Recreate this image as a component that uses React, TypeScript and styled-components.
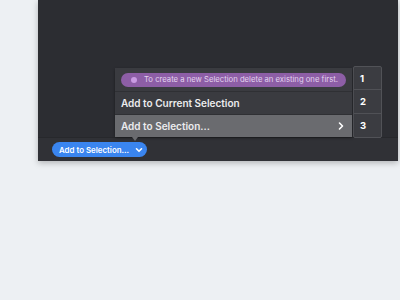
import React from 'react';
import styled, { createGlobalStyle } from 'styled-components';

const GlobalStyle = createGlobalStyle`
  html, body {
    margin: 0;
    padding: 0;
    background: #edf0f3;
    font-family: 'Inter', 'Noto Sans', sans-serif;
  }
`;

const Page = styled.div`
  width: 400px;
  height: 300px;
  overflow: hidden;
`;

const Panel = styled.div`
  position: relative;
  margin-left: 38px;
  width: 360px;
  height: 161px;
  display: flex;
  flex-direction: column;
  background: #2c2d32;
  box-shadow: 0 2px 6px rgba(0, 0, 0, 0.25);
`;

const Canvas = styled.div`
  flex: 1;
`;

const BottomBar = styled.div`
  height: 24px;
  display: flex;
  align-items: center;
  padding-left: 14px;
  background: #303136;
  border-top: 1px solid #27282c;
  box-sizing: border-box;
`;

const DropButton = styled.button`
  display: flex;
  align-items: center;
  gap: 5px;
  height: 15px;
  width: 95px;
  padding: 0 0 0 7px;
  border: none;
  border-radius: 8px;
  background: #3a85ef;
  color: #ffffff;
  font-family: inherit;
  font-size: 7.9px;
  font-weight: 600;
  white-space: nowrap;
  box-sizing: border-box;
`;

const Popover = styled.div`
  position: absolute;
  left: 77px;
  top: 66px;
  display: flex;
  align-items: flex-start;
`;

const Menu = styled.div`
  position: relative;
  margin-top: 2px;
  width: 237px;
  background: #3a3b40;
  border-radius: 2px;
  box-shadow: 0 1px 3px rgba(0, 0, 0, 0.4);

  &::after {
    content: '';
    position: absolute;
    left: 17px;
    bottom: -4px;
    border-left: 3px solid transparent;
    border-right: 3px solid transparent;
    border-top: 4px solid #6b6c70;
  }
`;

const Row = styled.div<{ $active?: boolean }>`
  height: 23px;
  display: flex;
  align-items: center;
  justify-content: space-between;
  padding: 0 6px;
  box-sizing: border-box;
  background: ${(p) => (p.$active ? '#6a6b6f' : '#3a3b40')};
  border-top: 1px solid #2f3034;
  color: #ececee;
  font-size: 10px;
  font-weight: 600;

  &:first-child {
    border-top: none;
  }
`;

const Notice = styled.div`
  display: flex;
  align-items: center;
  gap: 7px;
  width: 100%;
  height: 14px;
  padding-left: 10px;
  border-radius: 7px;
  background: #8d5ea6;
  color: #e3d3ee;
  font-size: 7.7px;
  font-weight: 400;
  box-sizing: border-box;
  white-space: nowrap;
`;

const Dot = styled.span`
  flex-shrink: 0;
  width: 6px;
  height: 6px;
  border-radius: 50%;
  background: #c99be2;
`;

const Numbers = styled.div`
  margin-left: 1px;
  width: 29px;
  background: #3b3c41;
  border: 1px solid #515257;
  border-radius: 2px;
  box-sizing: border-box;
`;

const NumCell = styled.div`
  height: 23px;
  display: flex;
  align-items: center;
  padding-left: 6px;
  border-top: 1px solid #505156;
  color: #ffffff;
  font-size: 9.5px;
  font-weight: 700;

  &:first-child {
    border-top: none;
    height: 22px;
  }
`;

const Chevron = ({ dir, size }: { dir: 'right' | 'down'; size: number }) => (
  <svg width={size} height={size} viewBox="0 0 10 10" fill="none" style={{ flexShrink: 0 }}>
    <path
      d={dir === 'right' ? 'M3.5 2 L6.5 5 L3.5 8' : 'M2.5 3.8 L5 6.3 L7.5 3.8'}
      stroke="#ffffff"
      strokeWidth="1.6"
      strokeLinecap="round"
      strokeLinejoin="round"
    />
  </svg>
);

export default function App() {
  return (
    <Page>
      <GlobalStyle />
      <Panel>
        <Canvas />
        <Popover>
          <Menu>
            <Row>
              <Notice>
                <Dot />
                To create a new Selection delete an existing one first.
              </Notice>
            </Row>
            <Row>Add to Current Selection</Row>
            <Row $active>
              Add to Selection...
              <Chevron dir="right" size={10} />
            </Row>
          </Menu>
          <Numbers>
            <NumCell>1</NumCell>
            <NumCell>2</NumCell>
            <NumCell>3</NumCell>
          </Numbers>
        </Popover>
        <BottomBar>
          <DropButton>
            Add to Selection...
            <Chevron dir="down" size={10} />
          </DropButton>
        </BottomBar>
      </Panel>
    </Page>
  );
}
